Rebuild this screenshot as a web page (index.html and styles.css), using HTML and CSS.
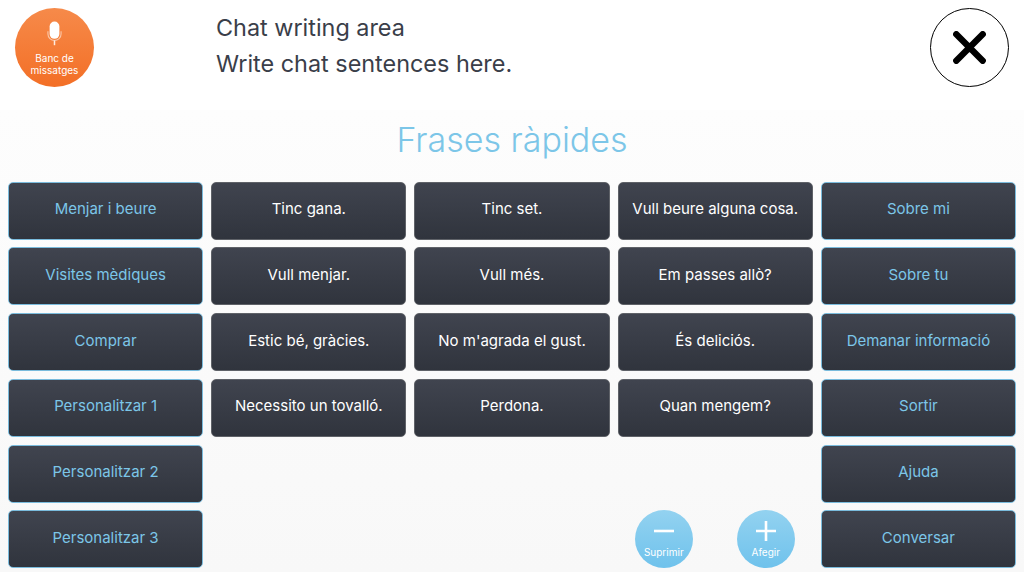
FILE: index.html
```html
<!doctype html>
<html lang="ca">
<head>
    <meta charset="UTF-8">
    <title>Frases ràpides</title>
    <link rel="stylesheet" href="styles.css">
</head>
<body>
    <header class="top">
        <button class="bank">
            <svg class="mic" viewBox="0 0 16 26">
                <rect x="2.8" y="0.3" width="10.4" height="18.4" rx="5.2" fill="#fff"/>
                <path d="M1 10.5v3a7 7 0 0 0 14 0v-3" fill="none" stroke="#fff" stroke-opacity=".55" stroke-width="1.2"/>
                <path d="M8 20.5v5" stroke="#fff" stroke-opacity=".85" stroke-width="1.6"/>
            </svg>
            <span>Banc de missatges</span>
        </button>
        <div class="chat">
            <div>Chat writing area</div>
            <div>Write chat sentences here.</div>
        </div>
        <button class="close" aria-label="close">
            <svg viewBox="0 0 32 32"><path d="M3.2 3.2l25.6 25.6M28.8 3.2L3.2 28.8" fill="none" stroke="#000" stroke-width="6.2" stroke-linecap="round"/></svg>
        </button>
    </header>

    <main class="panel">
        <h1>Frases ràpides</h1>
        <div class="grid">
            <button class="key cat">Menjar i beure</button>
            <button class="key">Tinc gana.</button>
            <button class="key">Tinc set.</button>
            <button class="key">Vull beure alguna cosa.</button>
            <button class="key cat">Sobre mi</button>

            <button class="key cat">Visites mèdiques</button>
            <button class="key">Vull menjar.</button>
            <button class="key">Vull més.</button>
            <button class="key">Em passes allò?</button>
            <button class="key cat">Sobre tu</button>

            <button class="key cat">Comprar</button>
            <button class="key">Estic bé, gràcies.</button>
            <button class="key">No m'agrada el gust.</button>
            <button class="key">És deliciós.</button>
            <button class="key cat">Demanar informació</button>

            <button class="key cat">Personalitzar 1</button>
            <button class="key">Necessito un tovalló.</button>
            <button class="key">Perdona.</button>
            <button class="key">Quan mengem?</button>
            <button class="key cat">Sortir</button>

            <button class="key cat">Personalitzar 2</button>
            <button class="key cat col-5">Ajuda</button>

            <button class="key cat">Personalitzar 3</button>
            <div class="actions">
                <button class="round">
                    <svg viewBox="0 0 20 20"><path d="M0 10h20" stroke="#fff" stroke-width="2.6"/></svg>
                    <span>Suprimir</span>
                </button>
                <button class="round">
                    <svg viewBox="0 0 20 20"><path d="M0 10h20M10 0v20" stroke="#fff" stroke-width="2.6"/></svg>
                    <span>Afegir</span>
                </button>
            </div>
            <button class="key cat">Conversar</button>
        </div>
    </main>
</body>
</html>
```

FILE: styles.css
```css
:root {
    --cl-text: #3a3e49;
    --cl-blue: #7cc6e8;
}

html, body {
    margin: 0;
    padding: 0;
    width: 100%;
    height: 100%;
    overflow: hidden;
    font-family: 'Inter', sans-serif;
    color: var(--cl-text);
    background: #fff;
}

body {
    display: flex;
    flex-direction: column;
}

button {
    font-family: inherit;
    border: none;
    padding: 0;
    cursor: pointer;
}

.top {
    display: flex;
    flex: none;
    align-items: flex-start;
    height: 100px;
    padding: 8px 15px 0 15px;
    box-sizing: border-box;
}

.bank {
    width: 79px;
    height: 79px;
    flex: none;
    border-radius: 50%;
    background: linear-gradient(#f68a4a, #f36f26);
    color: #fff;
    font-size: 10px;
    line-height: 12px;
    display: flex;
    flex-direction: column;
    align-items: center;
    padding-top: 13px;
    box-sizing: border-box;
}

.bank span {
    width: 60px;
    margin-top: 6px;
}

.mic {
    width: 15px;
    height: 25px;
}

.chat {
    flex: 1;
    margin: 2px 0 0 122px;
    font-size: 23.4px;
    line-height: 36px;
}

.close {
    width: 79px;
    height: 79px;
    flex: none;
    border-radius: 50%;
    background: #fff;
    border: solid 1px #000;
    display: flex;
    align-items: center;
    justify-content: center;
    box-sizing: border-box;
}

.close svg {
    width: 33px;
    height: 33px;
}

.panel {
    flex: none;
    height: 472px;
    background: linear-gradient(#fff 10px, #fdfdfd 10px, #f8f8f8);
    display: flex;
    flex-direction: column;
}

h1 {
    margin: 0;
    height: 82px;
    line-height: 80px;
    text-align: center;
    font-size: 34px;
    font-weight: 300;
    color: var(--cl-blue);
}

.grid {
    display: grid;
    grid-template-columns: repeat(5, 1fr);
    grid-template-rows: repeat(6, 58px);
    gap: 7.75px 8px;
    padding: 0 8px;
    margin-top: -0.5px;
}

.key {
    border-radius: 5px;
    background: linear-gradient(#40444f, #30343d);
    border: solid 1px #5f6268;
    color: #fff;
    font-size: 15px;
    padding-bottom: 4px;
}

.cat {
    border-color: #7abbdc;
    color: var(--cl-blue);
}

.col-5 {
    grid-column: 5;
}

.actions {
    grid-column: 2 / 5;
    display: flex;
    justify-content: flex-end;
    gap: 44px;
    padding-right: 18px;
    align-items: flex-end;
}

.round {
    width: 58px;
    height: 58px;
    border-radius: 50%;
    background: linear-gradient(#93d2f0, #6fc2ec);
    color: #fff;
    font-size: 10px;
    display: flex;
    flex-direction: column;
    align-items: center;
    padding-top: 11px;
    box-sizing: border-box;
}

.round svg {
    width: 20px;
    height: 20px;
}

.round span {
    margin-top: 5px;
}
```
